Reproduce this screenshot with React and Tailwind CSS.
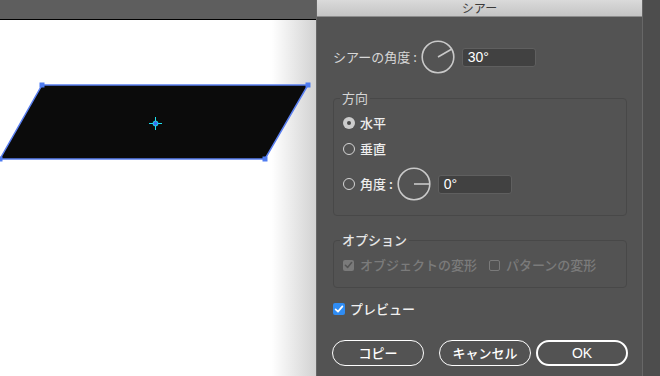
import React from 'react';

const Dial = ({ angle }) => {
    const a = (angle * Math.PI) / 180;
    return (
        <svg width="34" height="34" viewBox="0 0 34 34" className="block shrink-0">
            <circle cx="17" cy="17" r="15.8" fill="none" stroke="#c9c9c9" strokeWidth="1.6" />
            <line x1="17" y1="17" x2={17 + 15.5 * Math.cos(a)} y2={17 - 15.5 * Math.sin(a)} stroke="#c9c9c9" strokeWidth="1.6" />
        </svg>
    );
};

const Radio = ({ checked }) => (
    <span className={`w-[12px] h-[12px] rounded-full flex items-center justify-center shrink-0 ${checked ? 'bg-[#cdcdcd]' : 'border border-[#d4d4d4]'}`}>
        {checked && <span className="w-[4px] h-[4px] rounded-full bg-[#4a4a4a]" />}
    </span>
);

const Check = ({ color }) => (
    <svg width="12" height="12" viewBox="0 0 12 12" className="block">
        <path d="M2.6 6.3 L5 8.6 L9.4 3.4" fill="none" stroke={color} strokeWidth="1.7" strokeLinecap="round" strokeLinejoin="round" />
    </svg>
);

const ValueBox = ({ value }) => (
    <div className="w-[74px] h-[19px] bg-[#414141] border border-[#5f5f5f] rounded-[3px] pl-[5px] flex items-center text-[14px] text-white font-['Liberation_Sans',sans-serif]">
        {value}
    </div>
);

const App = () => {
    return (
        <div className="flex w-[660px] h-[376px] overflow-hidden font-['Noto_Sans_CJK_JP','Liberation_Sans',sans-serif]">
            {/* canvas */}
            <div className="w-[316px] flex flex-col shrink-0">
                <div className="h-[20px] bg-[#5e5e5e] border-b border-black" />
                <div className="flex-1 bg-linear-to-r from-white from-[86%] to-[#d2d2d2]">
                    <svg width="316" height="356" className="block">
                        <polygon points="42,65 308,65 265,139 0,139" fill="#0b0b0b" stroke="#5a7ff0" strokeWidth="1.5" />
                        <rect x="39.5" y="62.5" width="5" height="5" fill="#4f7cf2" />
                        <rect x="305.5" y="62.5" width="5" height="5" fill="#4f7cf2" />
                        <rect x="262.5" y="136.5" width="5" height="5" fill="#4f7cf2" />
                        <rect x="-2.5" y="136.5" width="5" height="5" fill="#4f7cf2" />
                        <line x1="149" y1="103.5" x2="162" y2="103.5" stroke="#1ee0f0" strokeWidth="1" />
                        <line x1="155.5" y1="97" x2="155.5" y2="110" stroke="#1ee0f0" strokeWidth="1" />
                        <circle cx="155.5" cy="103.5" r="2.5" fill="#3a6cf0" stroke="#1ee0f0" strokeWidth="1" />
                    </svg>
                </div>
            </div>

            {/* dialog */}
            <div className="w-[327px] shrink-0 flex flex-col bg-[#535353] border-x border-[#676767]">
                <div className="h-[17px] bg-linear-to-b from-[#dadada] to-[#c4c4c4] border-b border-[#8c8c8c] text-center text-[12px] leading-[16px] text-[#3a3a3a]">
                    シアー
                </div>
                <div className="pl-[16px] pr-[15px] pt-[23px]">
                    <div className="flex items-center h-[34px]">
                        <span className="text-[13px] text-[#d8d8d8]">シアーの角度 :</span>
                        <div className="ml-[4px]"><Dial angle={30} /></div>
                        <div className="ml-[7px]"><ValueBox value="30°" /></div>
                    </div>

                    <fieldset className="mt-[16px] border border-[#484848] rounded-[4px] px-[6px] pt-[7px] pb-[14px]">
                        <legend className="px-[2px] text-[13px] leading-[16px] text-[#d6d6d6]">方向</legend>
                        <div className="pl-[3px]">
                            <div className="flex items-center h-[20px]">
                                <Radio checked />
                                <span className="ml-[5px] text-[13px] font-medium text-[#ededed]">水平</span>
                            </div>
                            <div className="flex items-center h-[20px] mt-[6px]">
                                <Radio />
                                <span className="ml-[5px] text-[13px] font-medium text-[#ededed]">垂直</span>
                            </div>
                            <div className="flex items-center h-[34px] mt-[8px]">
                                <Radio />
                                <span className="ml-[5px] text-[13px] font-medium text-[#ededed]">角度 :</span>
                                <div className="ml-[4px]"><Dial angle={0} /></div>
                                <div className="ml-[7px]"><ValueBox value="0°" /></div>
                            </div>
                        </div>
                    </fieldset>

                    <fieldset className="mt-[16px] border border-[#484848] rounded-[4px] px-[6px] pt-[7px] pb-[12px]">
                        <legend className="px-[2px] text-[13px] leading-[16px] font-medium text-[#e6e6e6]">オプション</legend>
                        <div className="pl-[3px] flex items-center h-[20px]">
                            <span className="w-[11px] h-[11px] rounded-[2px] bg-[#7a7a7a] flex items-center justify-center">
                                <Check color="#545454" />
                            </span>
                            <span className="ml-[6px] text-[13px] font-medium text-[#7b7b7b]">オブジェクトの変形</span>
                            <span className="ml-[12px] w-[11px] h-[11px] rounded-[2px] border border-[#7a7a7a]" />
                            <span className="ml-[6px] text-[13px] font-medium text-[#7b7b7b]">パターンの変形</span>
                        </div>
                    </fieldset>

                    <div className="mt-[11px] flex items-center h-[20px]">
                        <span className="w-[12px] h-[12px] rounded-[2px] bg-[#2f8cf3] flex items-center justify-center">
                            <Check color="#ffffff" />
                        </span>
                        <span className="ml-[5px] text-[13px] font-medium text-[#f0f0f0]">プレビュー</span>
                    </div>

                    <div className="mt-[21px] -mx-px flex">
                        <button className="w-[92px] h-[26px] rounded-full border-[1.5px] border-white text-[13px] font-medium text-white">コピー</button>
                        <div className="ml-auto flex gap-[5px]">
                            <button className="w-[92px] h-[26px] rounded-full border-[1.5px] border-white text-[13px] font-medium text-white">キャンセル</button>
                            <button className="w-[92px] h-[26px] rounded-full border-2 border-white text-[14px] font-medium text-white font-['Liberation_Sans',sans-serif]">OK</button>
                        </div>
                    </div>
                </div>
            </div>

            <div className="flex-1 bg-[#4d4d4d]" />
        </div>
    );
};

export default App;
